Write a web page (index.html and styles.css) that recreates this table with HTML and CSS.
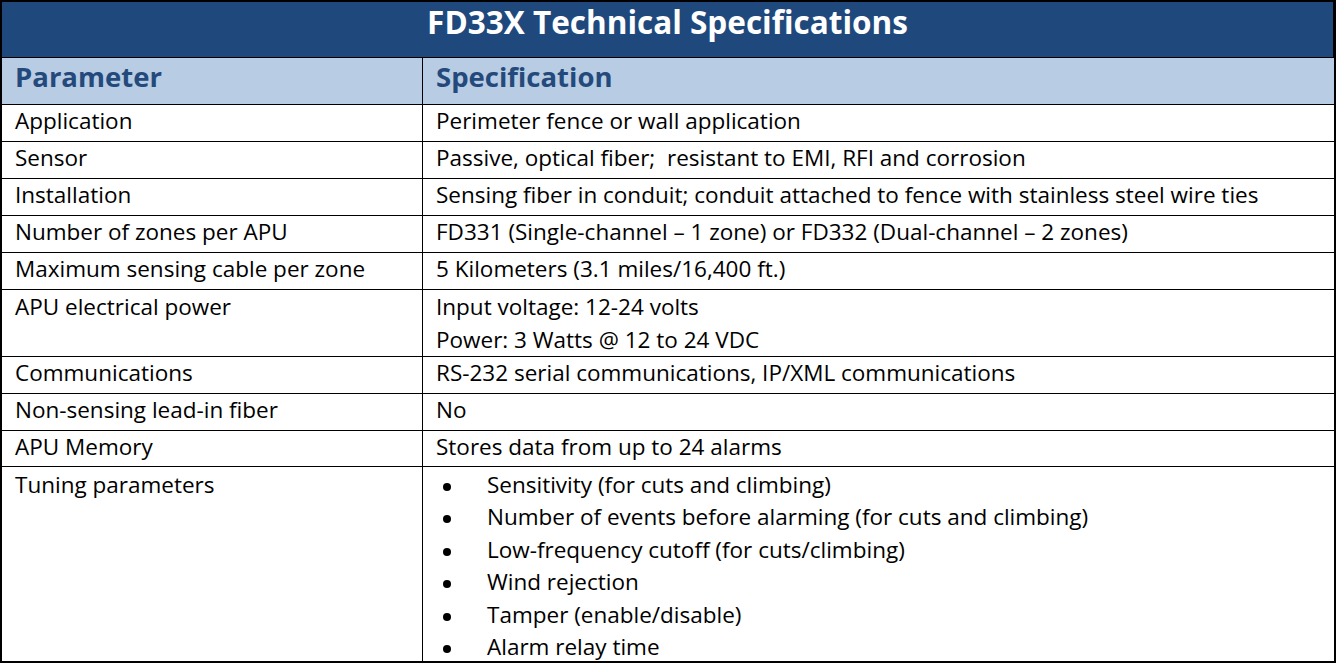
FILE: index.html
```html
<!DOCTYPE html>
<html lang="en">
<head>
<meta charset="utf-8">
<title>FD33X Technical Specifications</title>
<link rel="stylesheet" href="styles.css">
</head>
<body>
<table class="spec">
  <colgroup>
    <col class="col-param">
    <col class="col-spec">
  </colgroup>
  <thead>
    <tr><th class="title" colspan="2">FD33X Technical Specifications</th></tr>
    <tr class="head"><th>Parameter</th><th>Specification</th></tr>
  </thead>
  <tbody>
    <tr><td>Application</td><td>Perimeter fence or wall application</td></tr>
    <tr><td>Sensor</td><td>Passive, optical fiber;&nbsp; resistant to EMI, RFI and corrosion</td></tr>
    <tr><td>Installation</td><td>Sensing fiber in conduit; conduit attached to fence with stainless steel wire ties</td></tr>
    <tr><td>Number of zones per APU</td><td>FD331 (Single-channel – 1 zone) or FD332 (Dual-channel – 2 zones)</td></tr>
    <tr><td>Maximum sensing cable per zone</td><td>5 Kilometers (3.1 miles/16,400 ft.)</td></tr>
    <tr class="double"><td>APU electrical power</td><td>Input voltage: 12-24 volts<br>Power: 3 Watts @ 12 to 24 VDC</td></tr>
    <tr><td>Communications</td><td>RS-232 serial communications, IP/XML communications</td></tr>
    <tr><td>Non-sensing lead-in fiber</td><td>No</td></tr>
    <tr class="short"><td>APU Memory</td><td>Stores data from up to 24 alarms</td></tr>
    <tr class="tuning">
      <td>Tuning parameters</td>
      <td>
        <ul class="bullets">
          <li>Sensitivity (for cuts and climbing)</li>
          <li>Number of events before alarming (for cuts and climbing)</li>
          <li>Low-frequency cutoff (for cuts/climbing)</li>
          <li>Wind rejection</li>
          <li>Tamper (enable/disable)</li>
          <li>Alarm relay time</li>
        </ul>
      </td>
    </tr>
  </tbody>
</table>
</body>
</html>
```
FILE: styles.css
```css
html, body {
  margin: 0;
  padding: 0;
  background: #ffffff;
}

.spec {
  width: 1336px;
  table-layout: fixed;
  border-collapse: separate;
  border-spacing: 0;
  border: 2px solid #000;
  font-family: "Open Sans", "Liberation Sans", sans-serif;
  color: #000;
}

.col-param { width: 421px; }

.spec th,
.spec td {
  padding: 1px 13px 5px 13px;
  text-align: left;
  vertical-align: top;
  border-bottom: 1px solid #000;
  font-size: 22.5px;
  line-height: 30px;
  font-weight: 400;
}

.spec th:first-child,
.spec td:first-child {
  border-right: 1px solid #000;
}

.spec .title {
  background: #1F497D;
  color: #ffffff;
  text-align: center;
  font-size: 31.5px;
  font-weight: 700;
  line-height: 36px;
  padding: 2px 0 17px 0;
  border-right: none;
}

.head th {
  background: #B8CCE4;
  color: #244A7C;
  font-size: 27.5px;
  font-weight: 700;
  line-height: 32px;
  padding: 3px 13px 11px 13px;
}

.double td {
  line-height: 32.5px;
  padding: 1px 13px 0 13px;
}

.short td {
  padding-bottom: 4px;
}

.tuning td {
  border-bottom: none;
  padding-top: 2px;
  padding-bottom: 0;
  line-height: 32.4px;
}

.bullets {
  list-style: none;
  margin: 0 0 -2px 0;
  padding: 0;
}

.bullets li {
  display: flex;
  align-items: flex-start;
}

.bullets li::before {
  content: "";
  flex: none;
  width: 8px;
  height: 8px;
  border-radius: 50%;
  background: #000;
  margin: 14px 36px 0 7px;
}
```
